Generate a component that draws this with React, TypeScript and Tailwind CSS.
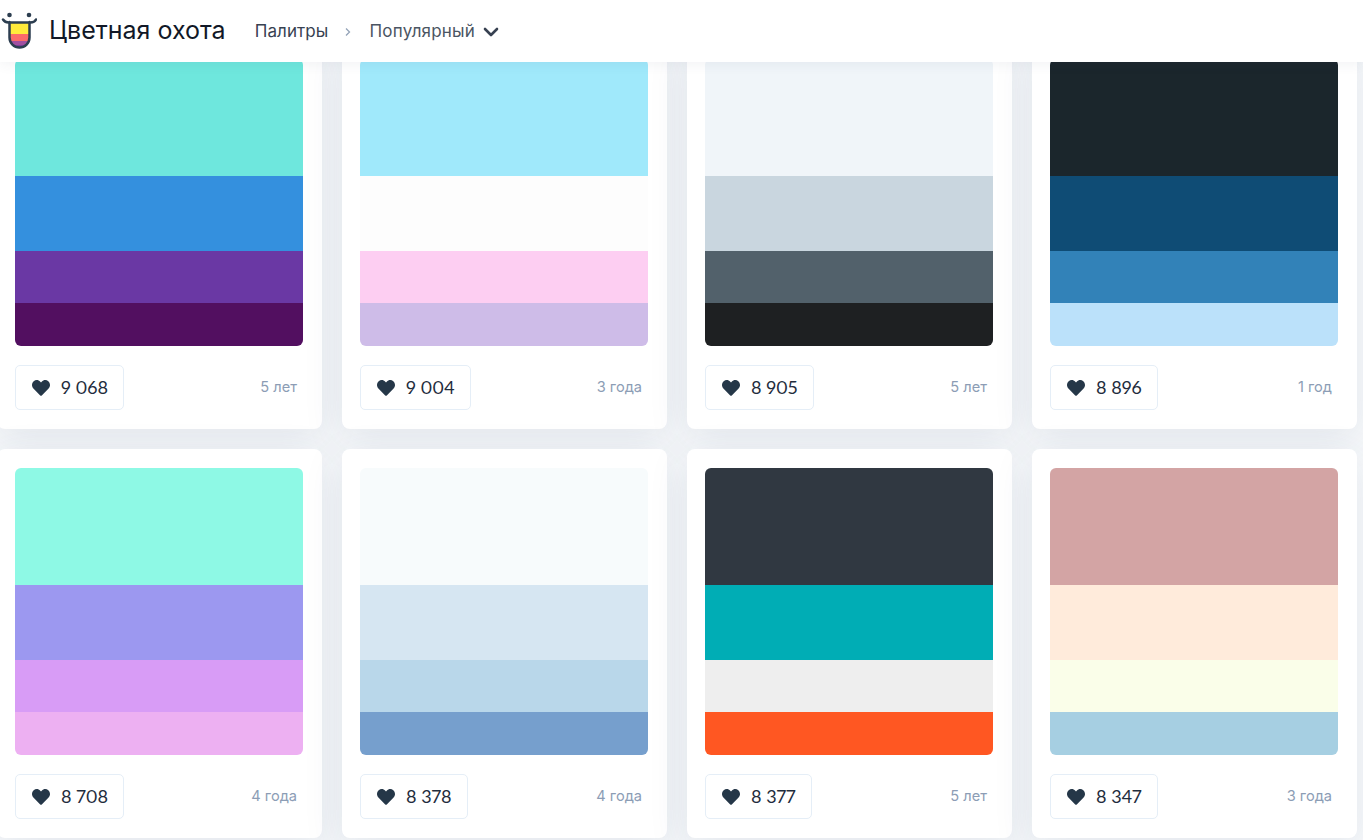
import { FaHeart } from "react-icons/fa";

const palettes = [
  { colors: ["#6ee7dd", "#3490de", "#6a38a4", "#520f60"], likes: "9 068", age: "5 лет" },
  { colors: ["#a0e9fb", "#fdfdfd", "#fdcef2", "#cebce8"], likes: "9 004", age: "3 года" },
  { colors: ["#f0f5f9", "#c9d6df", "#52616b", "#1e2022"], likes: "8 905", age: "5 лет" },
  { colors: ["#1b262c", "#0f4c75", "#3282b8", "#bbe1fa"], likes: "8 896", age: "1 год" },
  { colors: ["#8ef9e5", "#9c98f0", "#d89cf6", "#edb0f2"], likes: "8 708", age: "4 года" },
  { colors: ["#f7fbfc", "#d6e6f2", "#b9d7ea", "#769fcd"], likes: "8 378", age: "4 года" },
  { colors: ["#303841", "#00adb5", "#eeeeee", "#ff5722"], likes: "8 377", age: "5 лет" },
  { colors: ["#d3a4a4", "#ffebdb", "#fafee9", "#a6cfe2"], likes: "8 347", age: "3 года" },
];

function Logo() {
  return (
    <svg width="36" height="40" viewBox="0 0 36 40" className="shrink-0">
      <defs>
        <clipPath id="cup">
          <path d="M8.500 11h20v16a10 10 0 0 1-20 0z" />
        </clipPath>
      </defs>
      <circle cx="8.500" cy="4" r="2.300" fill="#2c3e50" />
      <circle cx="28" cy="4" r="2.300" fill="#2c3e50" />
      <g clipPath="url(#cup)">
        <rect x="8" y="12" width="21" height="11" fill="#ffeb3b" />
        <rect x="8" y="23" width="21" height="7" fill="#fb6a6a" />
        <rect x="8" y="30" width="21" height="4" fill="#a14fa0" />
        <rect x="8" y="34" width="21" height="3" fill="#7b3f98" />
      </g>
      <path
        d="M2 8.500c1.500 2.300 3 3 5.500 3h22c2.500 0 4.500-.7 5.500-3M8.500 11v15.500a10 10 0 0 0 20 0V11"
        fill="none"
        stroke="#2c3e50"
        strokeWidth="2.500"
        strokeLinecap="round"
      />
    </svg>
  );
}

function Header() {
  return (
    <header className="absolute top-0 left-0 z-10 flex h-[62px] w-full items-center bg-white pl-[1px] shadow-[0_2px_12px_rgba(50,70,100,0.07)]">
      <Logo />
      <span className="ml-[12px] text-[25px] text-[#111827]">Цветная охота</span>
      <span className="mt-[1px] ml-[29px] text-[17px] tracking-[0.1px] text-[#374151]">Палитры</span>
      <svg width="8" height="10" viewBox="0 0 8 10" className="mt-[1px] ml-[16px]">
        <path d="M2 1.500 5.500 5 2 8.500" fill="none" stroke="#94a3b8" strokeWidth="1.300" />
      </svg>
      <span className="mt-[1px] ml-[17px] text-[17px] tracking-[0.2px] text-[#4b5563]">Популярный</span>
      <svg width="16" height="10" viewBox="0 0 16 10" className="mt-[1px] ml-[8px]">
        <path d="M2 2l6 6 6-6" fill="none" stroke="#374151" strokeWidth="2.600" strokeLinecap="round" strokeLinejoin="round" />
      </svg>
    </header>
  );
}

function Card({ colors, likes, age }: { colors: string[]; likes: string; age: string }) {
  return (
    <div className="h-[389px] rounded-lg bg-white pt-[19px] pr-[19px] pl-[18px] shadow-[0_10px_40px_rgba(45,70,110,0.1)]">
      <div className="flex h-[287px] flex-col overflow-hidden rounded-md">
        <div className="h-[117px]" style={{ backgroundColor: colors[0] }} />
        <div className="h-[75px]" style={{ backgroundColor: colors[1] }} />
        <div className="h-[52px]" style={{ backgroundColor: colors[2] }} />
        <div className="h-[43px]" style={{ backgroundColor: colors[3] }} />
      </div>
      <div className="mt-[19px] flex items-center justify-between">
        <div className="flex h-[45px] items-center rounded-[5px] border border-[#e5eef7] pr-[15px] pl-[16px]">
          <FaHeart size={18} color="#253748" />
          <span className="ml-[11px] font-['Lato',sans-serif] text-[18px] text-[#1f2d3d] proportional-nums">{likes}</span>
        </div>
        <span className="pr-[6px] text-[14.600px] text-[#8c9db5]">{age}</span>
      </div>
    </div>
  );
}

export default function App() {
  return (
    <div className="relative h-[840px] w-full overflow-hidden bg-[#f7f9fb] font-['Inter',sans-serif]">
      <Header />
      <main className="ml-[-3px] grid w-[1360px] grid-cols-4 gap-5 pt-[40px]">
        {palettes.map((p) => (
          <Card key={p.likes} {...p} />
        ))}
      </main>
    </div>
  );
}
